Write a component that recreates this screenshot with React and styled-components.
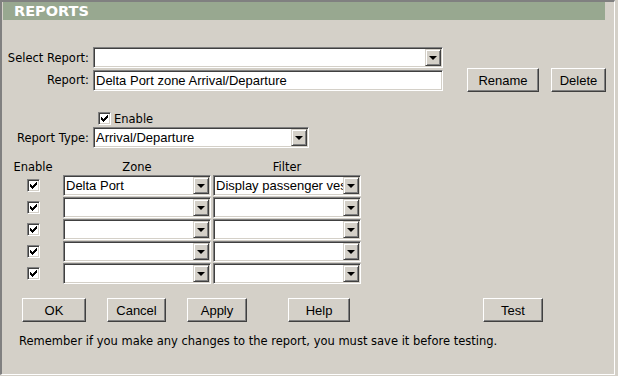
import React from "react";
import styled, { createGlobalStyle } from "styled-components";

const GlobalStyle = createGlobalStyle`
  html, body {
    margin: 0;
    padding: 0;
    background: #d4d0c8;
  }
  body {
    font-family: "DejaVu Sans", Verdana, sans-serif;
    font-size: 11.5px;
    color: #000;
  }
`;

const Panel = styled.div`
  width: 615px;
  height: 375px;
  box-sizing: border-box;
  background: #d4d0c8;
  border-top: 2px solid #808080;
  border-left: 2px solid #808080;
  border-right: 1px solid #fff;
  border-bottom: 1px solid #fff;
`;

const Header = styled.div`
  margin: 0 9px 0 1px;
  height: 18px;
  line-height: 18px;
  padding-left: 11px;
  background: #98a890;
  color: #fff;
  font-family: "DejaVu Sans", Verdana, sans-serif;
  font-weight: bold;
  font-size: 14.5px;
`;

const Form = styled.div`
  display: flex;
  flex-direction: column;
`;

const FieldRow = styled.div`
  display: flex;
  align-items: center;
  margin-top: ${(p) => p.$top || 0}px;
  height: ${(p) => p.$height || 21}px;
`;

const Label = styled.label`
  width: 87px;
  margin-right: 4px;
  text-align: right;
  white-space: nowrap;
`;

const Sunken = styled.div`
  box-sizing: border-box;
  display: flex;
  align-items: stretch;
  width: ${(p) => p.$width}px;
  height: 21px;
  padding: 1px;
  background: #fff;
  border: 1px solid;
  border-color: #808080 #fff #fff #808080;
  box-shadow: inset 1px 1px #404040, inset -1px -1px #d4d0c8;
  font-family: "Liberation Sans", Arial, sans-serif;
  font-size: 13px;
`;

const Value = styled.span`
  flex: 1;
  min-width: 0;
  padding-left: 1px;
  line-height: 17px;
  white-space: nowrap;
  overflow: hidden;
`;

const DropButton = styled.span`
  box-sizing: border-box;
  width: 16px;
  flex: none;
  display: flex;
  align-items: center;
  justify-content: center;
  background: #d4d0c8;
  border: 1px solid;
  border-color: #d4d0c8 #404040 #404040 #d4d0c8;
  box-shadow: inset 1px 1px #fff, inset -1px -1px #808080;

  &::after {
    content: "";
    margin-top: 1px;
    border-left: 4px solid transparent;
    border-right: 4px solid transparent;
    border-top: 4px solid #000;
  }
`;

const Button = styled.button`
  box-sizing: border-box;
  width: ${(p) => p.$width}px;
  height: 24px;
  margin-left: ${(p) => p.$offset || 0}px;
  padding: 0;
  background: #d4d0c8;
  border: 1px solid;
  border-color: #fff #404040 #404040 #fff;
  box-shadow: inset -1px -1px #808080;
  font-family: "Liberation Sans", Arial, sans-serif;
  font-size: 13px;
  color: #000;
`;

const CheckRow = styled.div`
  display: flex;
  align-items: center;
  gap: 3px;
  margin-top: 20px;
  padding-left: 96px;
  height: 13px;
`;

const Box = styled.span`
  box-sizing: border-box;
  width: 13px;
  height: 13px;
  display: inline-flex;
  align-items: center;
  justify-content: center;
  background: #fff;
  border: 1px solid;
  border-color: #808080 #fff #fff #808080;
  box-shadow: inset 1px 1px #404040, inset -1px -1px #d4d0c8;
`;

const Grid = styled.div`
  display: grid;
  grid-template-columns: 51px 148px 148px;
  grid-template-rows: 13px;
  grid-auto-rows: 21px;
  column-gap: 2px;
  row-gap: 1px;
  margin-top: 13px;
  padding-left: 8px;
  align-items: center;
`;

const HeadCell = styled.div`
  height: 13px;
  line-height: 13px;
  text-align: center;
  width: ${(p) => (p.$narrow ? "46px" : "auto")};
`;

const EnableCell = styled.div`
  width: 46px;
  display: flex;
  justify-content: center;
`;

const Actions = styled.div`
  display: flex;
  margin-top: 14px;
  padding-left: 20px;
`;

const Note = styled.p`
  margin: 13px 0 0;
  padding-left: 17px;
  line-height: 13px;
`;

function Check() {
  return (
    <Box>
      <svg width="7" height="7" viewBox="0 0 7 7" shapeRendering="crispEdges">
        <path
          fill="#000"
          d="M0 2h1v3H0z M1 3h1v3H1z M2 4h1v3H2z M3 3h1v3H3z M4 2h1v3H4z M5 1h1v3H5z M6 0h1v3H6z"
        />
      </svg>
    </Box>
  );
}

function Select({ width, value }) {
  return (
    <Sunken $width={width}>
      <Value>{value}</Value>
      <DropButton />
    </Sunken>
  );
}

const rows = [
  { zone: "Delta Port", filter: "Display passenger vessels" },
  { zone: "", filter: "" },
  { zone: "", filter: "" },
  { zone: "", filter: "" },
  { zone: "", filter: "" },
];

export default function App() {
  return (
    <>
      <GlobalStyle />
      <Panel>
        <Header>REPORTS</Header>
        <Form>
          <FieldRow $top={27}>
            <Label>Select Report:</Label>
            <Select width={350} value="" />
          </FieldRow>
          <FieldRow $height={24}>
            <Label>Report:</Label>
            <Sunken $width={350}>
              <Value>Delta Port zone Arrival/Departure</Value>
            </Sunken>
            <Button $width={72} $offset={24}>Rename</Button>
            <Button $width={55} $offset={12}>Delete</Button>
          </FieldRow>
          <CheckRow>
            <Check />
            <span>Enable</span>
          </CheckRow>
          <FieldRow $top={2}>
            <Label>Report Type:</Label>
            <Select width={216} value="Arrival/Departure" />
          </FieldRow>
          <Grid>
            <HeadCell $narrow>Enable</HeadCell>
            <HeadCell>Zone</HeadCell>
            <HeadCell>Filter</HeadCell>
            {rows.map((r, i) => (
              <React.Fragment key={i}>
                <EnableCell>
                  <Check />
                </EnableCell>
                <Select width={148} value={r.zone} />
                <Select width={148} value={r.filter} />
              </React.Fragment>
            ))}
          </Grid>
          <Actions>
            <Button $width={64}>OK</Button>
            <Button $width={59} $offset={21}>Cancel</Button>
            <Button $width={60} $offset={21}>Apply</Button>
            <Button $width={62} $offset={41}>Help</Button>
            <Button $width={60} $offset={133}>Test</Button>
          </Actions>
          <Note>
            Remember if you make any changes to the report, you must save it
            before testing.
          </Note>
        </Form>
      </Panel>
    </>
  );
}
